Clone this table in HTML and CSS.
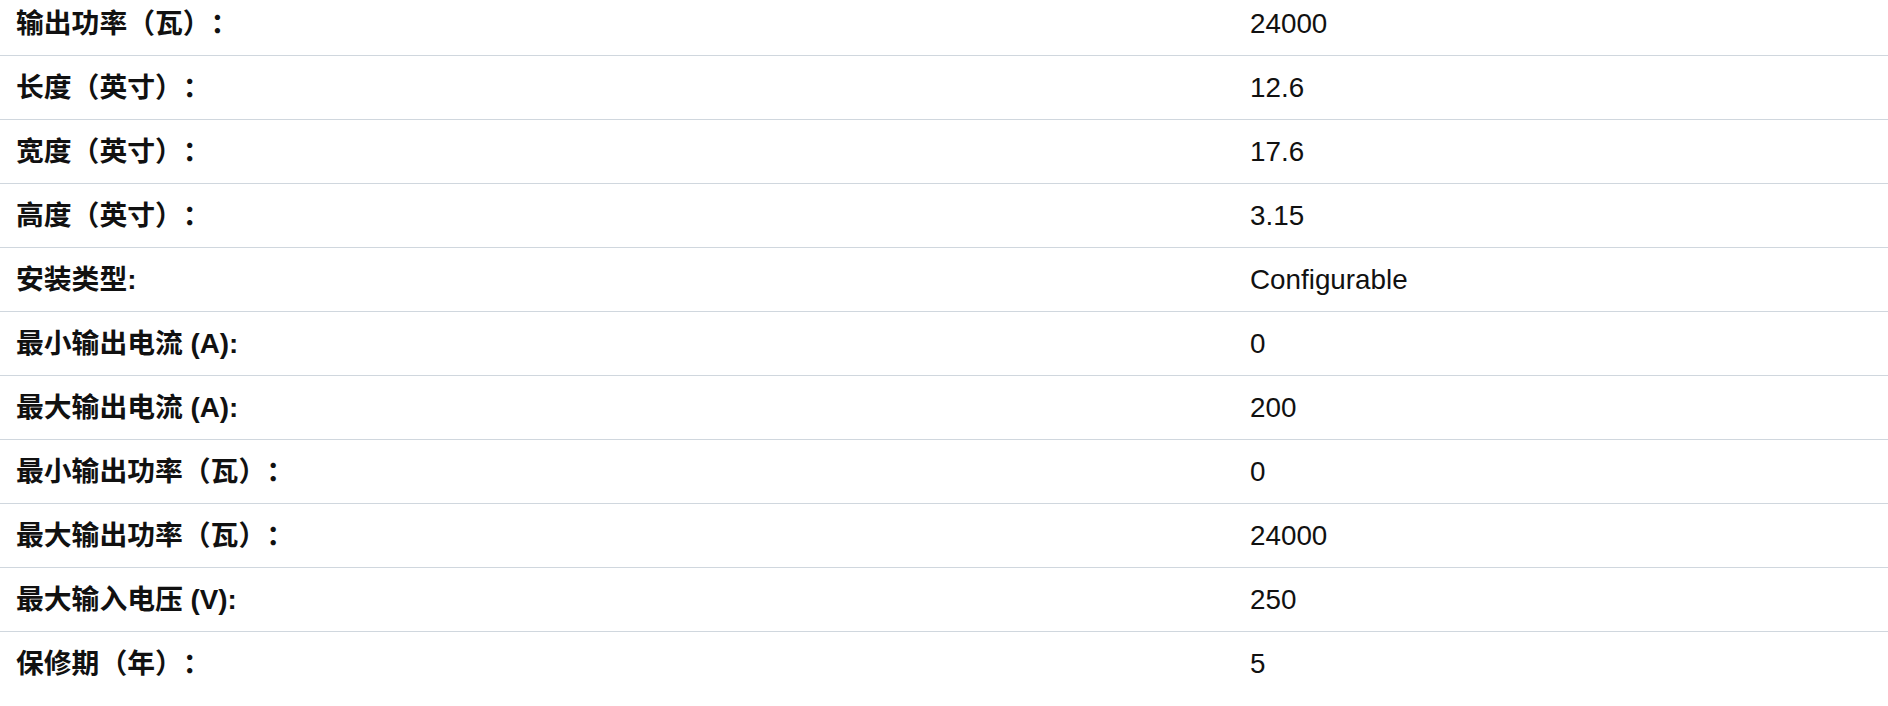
FILE: index.html
```
<!DOCTYPE html>
<html lang="zh">
<head>
<meta charset="utf-8">
<title>规格</title>
<link rel="stylesheet" href="styles.css">
</head>
<body>
<div class="specs">
  <div class="row"><div class="label">输出功率（瓦）：</div><div class="value">24000</div></div>
  <div class="row"><div class="label">长度（英寸）：</div><div class="value">12.6</div></div>
  <div class="row"><div class="label">宽度（英寸）：</div><div class="value">17.6</div></div>
  <div class="row"><div class="label">高度（英寸）：</div><div class="value">3.15</div></div>
  <div class="row"><div class="label">安装类型:</div><div class="value">Configurable</div></div>
  <div class="row"><div class="label">最小输出电流 (A):</div><div class="value">0</div></div>
  <div class="row"><div class="label">最大输出电流 (A):</div><div class="value">200</div></div>
  <div class="row"><div class="label">最小输出功率（瓦）：</div><div class="value">0</div></div>
  <div class="row"><div class="label">最大输出功率（瓦）：</div><div class="value">24000</div></div>
  <div class="row"><div class="label">最大输入电压 (V):</div><div class="value">250</div></div>
  <div class="row"><div class="label">保修期（年）：</div><div class="value">5</div></div>
</div>
</body>
</html>
```
FILE: styles.css
```
html, body {
  margin: 0;
  padding: 0;
  background: #ffffff;
  overflow: hidden;
}
body {
  font-family: "Liberation Sans", Arial, "Noto Sans CJK SC", sans-serif;
  font-size: 27.8px;
  color: #111111;
  text-spacing-trim: space-all;
}
.specs {
  margin-top: -8px;
}
.row {
  display: grid;
  grid-template-columns: 1234px 1fr;
  height: 63px;
  line-height: 63px;
  border-bottom: 1px solid #d0d7de;
}
.row:last-child {
  border-bottom: none;
}
.label {
  padding-left: 16px;
  font-weight: 700;
  white-space: nowrap;
  text-spacing-trim: space-all;
}
.value {
  padding-left: 16px;
  white-space: nowrap;
}
```
